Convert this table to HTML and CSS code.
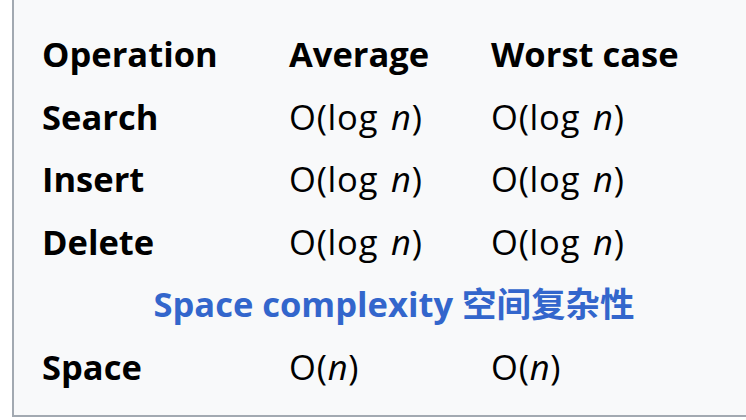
FILE: index.html
```html
<!DOCTYPE html>
<html lang="en">
<head>
<meta charset="utf-8">
<title>Complexity</title>
<link rel="stylesheet" href="styles.css">
</head>
<body>
<div class="box">
  <div class="grid">
    <div class="th">Operation</div>
    <div class="th">Average</div>
    <div class="th">Worst case</div>

    <div class="th">Search</div>
    <div class="td">O(log <i>n</i>)</div>
    <div class="td">O(log <i>n</i>)</div>

    <div class="th">Insert</div>
    <div class="td">O(log <i>n</i>)</div>
    <div class="td">O(log <i>n</i>)</div>

    <div class="th">Delete</div>
    <div class="td">O(log <i>n</i>)</div>
    <div class="td">O(log <i>n</i>)</div>

    <div class="section">Space complexity 空间复杂性</div>

    <div class="th">Space</div>
    <div class="td">O(<i>n</i>)</div>
    <div class="td">O(<i>n</i>)</div>
  </div>
</div>
</body>
</html>
```

FILE: styles.css
```css
html, body {
  margin: 0;
  padding: 0;
  background: #ffffff;
}
body {
  padding-left: 12px;
  font-family: "Open Sans", "Noto Sans CJK SC", sans-serif;
  color: #000000;
}
.box {
  height: 392px;
  background: #f8f9fa;
  border-left: 2px solid #a2a9b1;
  border-bottom: 2px solid #a2a9b1;
  padding-top: 23px;
}
.grid {
  display: grid;
  grid-template-columns: 247px 202px 1fr;
  grid-auto-rows: 62.5px;
  padding-left: 28px;
  font-size: 34.5px;
  line-height: 62.5px;
}
.th {
  font-weight: 700;
}
.td {
  font-weight: 400;
  letter-spacing: 0.8px;
  word-spacing: 3px;
}
.section {
  grid-column: 1 / -1;
  text-align: center;
  font-weight: 700;
  color: #3366cc;
}
```
